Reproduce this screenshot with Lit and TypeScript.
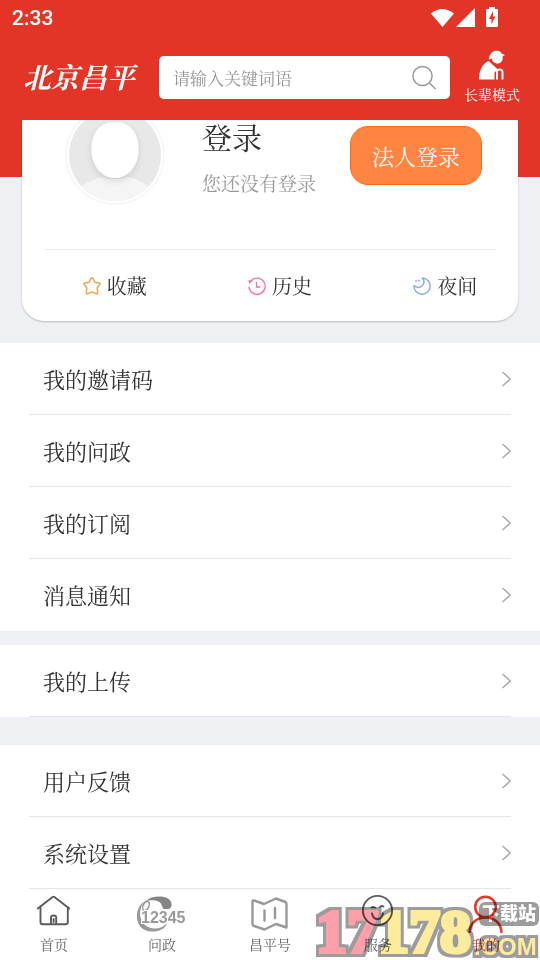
import { LitElement, html, css, svg } from "lit";
import { customElement, property } from "lit/decorators.js";
import { classMap } from "lit/directives/class-map.js";

const icons = {
  star: svg`<svg viewBox="0 0 18 18" width="18" height="18" fill="none" stroke="#f5a54a" stroke-width="1.5" stroke-linejoin="round"><path d="M8.1 1.3Q9 .4 9.9 1.3L12 5.300L16.300 6Q17.500 6.500 16.700 7.600L14.200 10.900L14.700 15.700Q14.700 17.200 13.300 16.800L9 14.900L4.700 16.800Q3.300 17.200 3.300 15.700L3.800 10.900L1.300 7.600Q.5 6.500 1.700 6L6 5.300Z"/></svg>`,
  history: svg`<svg viewBox="0 0 18 18" width="18" height="18" fill="none" stroke="#f5719b" stroke-width="1.3"><path d="M2.600 4.300A8.100 8.100 0 1 1 1 9.500"/><path d="M8.500 5V10H12.300"/><path d="M.3 3.200L5.200 3.500L1.300 6.700Z" fill="#f5719b" stroke="none"/></svg>`,
  moon: svg`<svg viewBox="0 0 18 18" width="18" height="18" fill="none" stroke="#8aa8f5" stroke-width="1.4" stroke-linejoin="round"><path d="M9.200 1A8.100 8.100 0 1 1 1 8.500C3.500 11.200 7.500 11 9.600 8.400C11.500 6 11.100 3 9.200 1Z"/><path d="M2 3.900H4.200M3.100 2.800V5M5.200 3.600H7.200M6.200 2.600V4.600" stroke-width=".9"/></svg>`,
  home: svg`<svg viewBox="0 0 50 40" width="50" height="40" fill="none" stroke="#5c5c5c" stroke-width="1.900" stroke-linecap="round" stroke-linejoin="round"><path d="M8.800 15.500L23.600 4Q24.500 3.300 25.400 4L40.300 15.500M11.500 14V29.300Q11.500 31.300 13.500 31.300H36.500Q38.800 31.300 38.800 29.300V14M22 31V24.500Q22 22.500 24.600 22.500Q27.200 22.500 27.200 24.500V31M24.600 26V29"/></svg>`,
  hotline: svg`<svg viewBox="0 0 50 40" width="50" height="40"><path d="M9 8C15 2 31 2 34 9C35.500 13 34 16 31 16H27C24.500 15 26 11 21.500 8.500C18 6.800 13 7 9 8Z" fill="#858585"/><path d="M8 8C-5 16 -2 38 14 38.500C22 39 28 36 30.500 30C25 35.500 18 36.500 12.500 34.500C2 31 0 17 8 8Z" fill="#999"/><ellipse cx="9" cy="13" rx="2.800" ry="4.800" transform="rotate(25 9 13)" fill="#f7f7f7" stroke="#8a8a8a" stroke-width="1.200"/><text x="4" y="30" class="digits">12345</text></svg>`,
  map: svg`<svg viewBox="0 0 50 40" width="50" height="40" fill="none" stroke="#999" stroke-width="2.400" stroke-linejoin="round" stroke-linecap="round"><path d="M7.500 8.500Q7.500 7 9 7.500L19 11L31 5.500L40.500 9Q41.500 9.500 41.500 11V34.500L31 31L19.500 36.500L9 33Q7.500 32.500 7.500 31ZM19.500 17.500V27.500M30 15V25"/></svg>`,
  smile: svg`<svg viewBox="0 0 50 40" width="50" height="40" fill="none" stroke="#5c5c5c" stroke-width="1.900" stroke-linecap="round"><circle cx="24.500" cy="17.500" r="14.600"/><path d="M18.500 14.500Q20 13.500 22 14.500M27 13.800Q29 12.500 30.500 13.500"/><path d="M19 20.500Q20 26 24.500 26Q29 26 30 20.500"/></svg>`,
  person: svg`<svg viewBox="0 0 50 40" width="50" height="40" fill="none" stroke="#e33a2b" stroke-width="2.500"><circle cx="24.500" cy="14" r="10.300"/><path d="M8.500 40C8.500 30 16 24.500 24.500 24.500S40.500 30 40.500 40"/></svg>`,
};

const actions = [
  { label: "收藏", icon: icons.star },
  { label: "历史", icon: icons.history },
  { label: "夜间", icon: icons.moon },
];

const groups = [
  { rows: ["我的邀请码", "我的问政", "我的订阅", "消息通知"], cls: "first" },
  { rows: ["我的上传"], cls: "ruled" },
  { rows: ["用户反馈", "系统设置"], cls: "ruled last" },
];

const tabs = [
  { label: "首页", icon: icons.home },
  { label: "问政", icon: icons.hotline },
  { label: "昌平号", icon: icons.map },
  { label: "服务", icon: icons.smile },
  { label: "我的", icon: icons.person, active: true },
];

@customElement("menu-group")
class MenuGroup extends LitElement {
  @property({ attribute: false }) rows: string[] = [];

  static styles = css`
    :host { display: block; background: #fff; }
    .list { list-style: none; margin: 0; padding: 0 29px; }
    .item { box-sizing: border-box; height: 72px; border-bottom: 1px solid #e4e5e6; }
    :host(.first) .item:last-child { border-bottom-color: transparent; }
    .link {
      height: 100%; padding-left: 14px; display: flex; align-items: center;
      justify-content: space-between; color: #333; text-decoration: none;
      font-size: 22px; line-height: 32px;
    }
  `;

  render() {
    return html`<ul class="list">
      ${this.rows.map((row) => html`<li class="item"><a class="link" href="#">
        <span>${row}</span>
        <svg viewBox="0 0 10 16" width="10" height="16" fill="none" stroke="#a6a6a6" stroke-width="1.400"><path d="M1.500 1L9.200 8L1.500 15"/></svg>
      </a></li>`)}
    </ul>`;
  }
}

@customElement("app-root")
class AppRoot extends LitElement {
  static styles = css`
    :host {
      display: flex; flex-direction: column; min-height: 100vh; position: relative;
      background: #eff0f4; color: #333;
      font-family: "Noto Serif CJK SC", "Noto Serif SC", "Source Han Serif SC", "Noto Sans CJK SC", serif;
    }
    .top { background: #e33527; color: #fff; }
    .status {
      height: 36px; padding: 0 42px 0 12px; display: flex; align-items: center;
      justify-content: space-between; font: 500 21px/36px Roboto, sans-serif;
    }
    .header { display: flex; align-items: center; height: 84px; padding: 0 20px 0 23px; box-sizing: border-box; }
    .logo {
      width: 136px; flex: none; margin: 0 0 4px; font-size: 28px; line-height: 40px;
      font-weight: 700; font-style: italic; white-space: nowrap;
    }
    .search {
      flex: 1; min-width: 0; height: 43px; margin-bottom: 1px; padding: 0 13px 0 14px; box-sizing: border-box;
      display: flex; align-items: center; background: #fff; border-radius: 5px;
    }
    .field {
      flex: 1; min-width: 0; border: 0; padding: 0; outline: 0; background: none;
      font: 17px/28px "Noto Serif CJK SC", "Noto Serif SC", "Noto Sans CJK SC", serif; color: #333;
    }
    .field::placeholder { color: #969696; opacity: 1; }
    .plain { border: 0; padding: 0; background: none; font: inherit; color: inherit; display: flex; align-items: center; }
    .elder { flex-direction: column; gap: 4px; margin: 0 0 2px 14px; font-size: 14px; line-height: 20px; white-space: nowrap; }
    .hero { padding: 0 22px 22px; background: linear-gradient(#e33527, #e33527) top / 100% 57px no-repeat; }
    .card {
      background: #fff; border-radius: 0 0 22px 22px;
      box-shadow: 0 1px 2px rgba(0, 0, 0, 0.22);
    }
    .profile { display: flex; height: 129px; padding: 0 36px 0 43px; }
    .portrait { flex: none; overflow: hidden; }
    .avatar { display: block; margin-top: -15px; }
    .who { flex: 1; padding-left: 37px; white-space: nowrap; }
    .name { margin: 0; font-size: 30px; line-height: 32px; font-weight: 400; }
    .hint { margin: 16px 0 0; font-size: 19px; line-height: 30px; color: #999; }
    .corp {
      flex: none; width: 132px; height: 59px; margin-top: 6px; padding: 0; border: 1px solid #ff6a14; border-radius: 18px;
      background: #ff8542; color: #fff; font: 22px/32px "Noto Serif CJK SC", "Noto Serif SC", "Noto Sans CJK SC", serif;
    }
    .actions { display: grid; grid-template-columns: repeat(3, 1fr); height: 71px; }
    .rule { height: 1px; margin: 0 22px; border: 0; background: #ebebeb; }
    .action { justify-content: center; gap: 6px; padding-left: 20px; font-size: 20px; line-height: 28px; }
    .groups { display: flex; flex-direction: column; gap: 14px; }
    .last { margin-top: 14px; }
    .tabs { flex: 1; display: grid; grid-template-columns: repeat(5, 1fr); min-height: 71px; background: #fff; }
    .tab {
      display: flex; flex-direction: column; align-items: center; padding-top: 4px; color: #666;
      text-decoration: none; font-size: 14px; line-height: 22px; box-sizing: border-box;
    }
    .tab.active { color: #d8392b; }
    .digits { font: 700 16px "Liberation Sans", sans-serif; fill: #999; stroke: #fff; stroke-width: 2px; paint-order: stroke; }
    .mark { position: absolute; right: 0; bottom: 0; mix-blend-mode: multiply; pointer-events: none; }
    .big { font: 700 62px "Liberation Serif", serif; stroke-width: 4px; }
    .com { font: 700 24px "Liberation Sans", sans-serif; fill: #ffeb9c; }
    .site { font: 900 18px "Noto Sans CJK SC", sans-serif; fill: #fff; }
    .pink { fill: #ff9fa8; stroke: #ff9fa8; }
    .gold { fill: #ffeb9c; stroke: #ffeb9c; }
  `;

  render() {
    return html`
      <header class="top">
        <div class="status">
          <span>2:33</span>
          <svg viewBox="0 0 68 24" width="68" height="24" fill="#fff">
            <path d="M1 7.500Q12 -1.500 24 7.500L12.500 21Z"/><path d="M45 2V21H26Z"/>
            <path d="M57 3H59V1H65V3H67Q68 3 68 4V20Q68 21 67 21H57Q56 21 56 20V4Q56 3 57 3Z"/>
            <path d="M63 5L59 13H61.500V18L65.500 10.500H63Z" fill="#e33527"/>
          </svg>
        </div>
        <div class="header">
          <h1 class="logo">北京昌平</h1>
          <form class="search" role="search" @submit=${(e: Event) => e.preventDefault()}>
            <input class="field" type="search" aria-label="搜索" placeholder="请输入关键词语" />
            <button class="plain" type="submit" aria-label="搜索">
              <svg viewBox="0 0 26 26" width="26" height="26" fill="none" stroke="#999" stroke-width="1.500"><circle cx="11.500" cy="11" r="9.600"/><path d="M18.300 17.800L24.500 24"/></svg>
            </button>
          </form>
          <button class="plain elder">
            <svg viewBox="0 0 28 30" width="28" height="30" fill="#fff">
              <path d="M11 8.500C12 3 15 .5 19 .8C22 .8 23 2 23.500 3.500L27 5L24.500 6.500C25.500 11 22.500 14 18.500 13.500C15.500 13 14 11 14 8.500L10.500 9.500Z"/>
              <path d="M10.500 11C4 14 1 21 1 29.500H16.500V22.500L19.500 19.500Z"/>
              <path d="M10 12L20 21M19 29.500V23M19 23V21.500Q19 19.500 21.500 19.500T24.500 21.500V29.500" fill="none" stroke="#fff" stroke-width="1.900"/>
            </svg>
            <span>长辈模式</span>
          </button>
        </div>
      </header>
      <main>
        <section class="hero">
          <div class="card">
            <div class="profile">
              <div class="portrait">
                <svg class="avatar" viewBox="0 0 100 100" width="100" height="100" aria-hidden="true">
                  <defs>
                    <clipPath id="face"><circle cx="50" cy="50" r="46"/></clipPath>
                    <filter id="shade" x="-30%" y="-30%" width="160%" height="160%"><feDropShadow dx="0" dy="3" stdDeviation="3" flood-opacity=".12"/></filter>
                  </defs>
                  <circle cx="50" cy="50" r="49" fill="#fff" stroke="#f7f7f7" stroke-width="2"/>
                  <g clip-path="url(#face)">
                    <rect width="100" height="100" fill="#e8e8e8"/>
                    <path d="M12 84Q23 76 36 72Q50 76 64 72Q77 76 88 84V100H12Z" fill="#f5f5f5"/>
                  </g>
                  <path d="M50 17C65 17 73.500 28 73.500 44C73.500 61 63 73 50 73S26.500 61 26.500 44C26.500 28 35 17 50 17Z" fill="#fff" filter="url(#shade)"/>
                </svg>
              </div>
              <div class="who">
                <h2 class="name">登录</h2>
                <p class="hint">您还没有登录</p>
              </div>
              <button class="corp">法人登录</button>
            </div>
            <hr class="rule" />
            <div class="actions">
              ${actions.map((a) => html`<button class="plain action">${a.icon}<span>${a.label}</span></button>`)}
            </div>
          </div>
        </section>
        <div class="groups">
          ${groups.map((g) => html`<menu-group class=${g.cls} .rows=${g.rows}></menu-group>`)}
        </div>
      </main>
      <nav class="tabs">
        ${tabs.map((t) => html`<a href="#" class=${classMap({ tab: true, active: !!t.active })}>${t.icon}<span>${t.label}</span></a>`)}
      </nav>
      <svg class="mark" viewBox="0 0 224 62" width="224" height="62">
        <defs>
          <filter id="edge" filterUnits="userSpaceOnUse" x="0" y="0" width="224" height="62" color-interpolation-filters="sRGB">
            <feMorphology in="SourceAlpha" operator="dilate" radius="3" result="wide"/>
            <feFlood flood-color="#9c9c9c"/>
            <feComposite in2="wide" operator="in" result="rim"/>
            <feMerge><feMergeNode in="rim"/><feMergeNode in="SourceGraphic"/></feMerge>
          </filter>
        </defs>
        <g filter="url(#edge)">
          <text class="big" x="0" y="54"><tspan class="pink">17</tspan><tspan class="gold">178</tspan></text>
          <text class="com" x="158" y="57">.COM</text>
        </g>
        <rect x="163" y="4" width="60" height="24" rx="6" fill="#9c9c9c"/>
        <text class="site" x="166" y="22">下载站</text>
      </svg>
    `;
  }
}
